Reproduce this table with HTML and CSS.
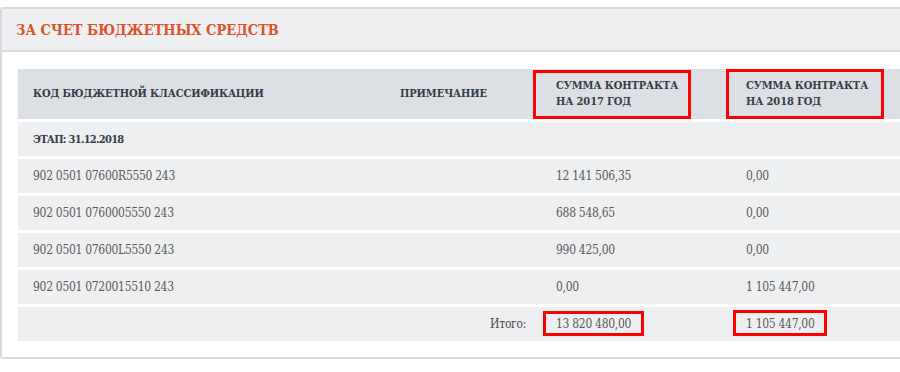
FILE: index.html
```html
<!DOCTYPE html>
<html lang="ru">
<head>
<meta charset="utf-8">
<title>За счет бюджетных средств</title>
<link rel="stylesheet" href="styles.css">
</head>
<body>
<section class="panel">
  <header class="panel-head">
    <h2 class="panel-title">ЗА СЧЕТ БЮДЖЕТНЫХ СРЕДСТВ</h2>
  </header>
  <div class="panel-body">
    <table class="budget">
      <colgroup>
        <col class="c-code">
        <col class="c-note">
        <col class="c-sum1">
        <col class="c-sum2">
      </colgroup>
      <thead>
        <tr class="head-row">
          <th>КОД БЮДЖЕТНОЙ КЛАССИФИКАЦИИ</th>
          <th>ПРИМЕЧАНИЕ</th>
          <th>СУММА КОНТРАКТА<br>НА 2017 ГОД</th>
          <th>СУММА КОНТРАКТА<br>НА 2018 ГОД</th>
        </tr>
      </thead>
      <tbody>
        <tr class="stage-row"><td colspan="4">ЭТАП: 31.12.2018</td></tr>
        <tr><td>902 0501 07600R5550 243</td><td></td><td>12 141 506,35</td><td>0,00</td></tr>
        <tr><td>902 0501 0760005550 243</td><td></td><td>688 548,65</td><td>0,00</td></tr>
        <tr><td>902 0501 07600L5550 243</td><td></td><td>990 425,00</td><td>0,00</td></tr>
        <tr><td>902 0501 0720015510 243</td><td></td><td>0,00</td><td>1 105 447,00</td></tr>
        <tr class="total-row"><td></td><td class="total-label">Итого:</td><td>13 820 480,00</td><td>1 105 447,00</td></tr>
      </tbody>
    </table>
  </div>
  <span class="mark mark-h1"></span>
  <span class="mark mark-h2"></span>
  <span class="mark mark-t1"></span>
  <span class="mark mark-t2"></span>
</section>
</body>
</html>
```

FILE: styles.css
```css
html, body {
  margin: 0;
  padding: 0;
  background: #ffffff;
  overflow: hidden;
}

body {
  font-family: "DejaVu Serif Condensed", "DejaVu Serif", serif;
  font-stretch: condensed;
  color: #585858;
  padding-top: 7px;
}

.panel {
  position: relative;
  box-sizing: border-box;
  width: 900px;
  border: 2px solid #d7dade;
  border-right: 0;
  border-radius: 3px 0 0 3px;
  background: #ffffff;
}

.panel-head {
  height: 41px;
  display: flex;
  align-items: center;
  padding: 0 14px;
  background: #eeeff1;
  border-bottom: 2px solid #d7dade;
}

.panel-title {
  margin: 0;
  font-size: 14.5px;
  font-weight: bold;
  color: #d9532c;
}

.panel-body {
  padding: 17px 0 16px 16px;
}

.budget {
  width: 100%;
  table-layout: fixed;
  border-collapse: separate;
  border-spacing: 0 3px;
  margin: -3px 0;
  font-size: 12px;
  letter-spacing: -0.3px;
}

.c-code { width: 367px; }
.c-note { width: 156px; }
.c-sum1 { width: 190px; }

.budget th,
.budget td {
  padding: 0 15px;
  text-align: left;
  vertical-align: middle;
  white-space: nowrap;
}

.head-row th {
  height: 50px;
  background: #dcdfe4;
  color: #353c47;
  font-weight: bold;
  font-size: 11px;
  letter-spacing: -0.1px;
  line-height: 16px;
}

.budget tbody td {
  height: 34px;
  background: #eeeff1;
}

.budget .stage-row td {
  font-weight: bold;
  font-size: 11px;
  letter-spacing: -0.7px;
  color: #353c47;
}

.budget td.total-label {
  text-align: right;
  color: #4a4a4a;
}

.mark {
  position: absolute;
  box-sizing: border-box;
  border: 3px solid #ff0000;
}

.mark-h1 { left: 531px; top: 61px; width: 158px; height: 49px; }
.mark-h2 { left: 724px; top: 60px; width: 158px; height: 50px; }
.mark-t1 { left: 541px; top: 302px; width: 101px; height: 25px; }
.mark-t2 { left: 731px; top: 301px; width: 94px; height: 26px; }
```
